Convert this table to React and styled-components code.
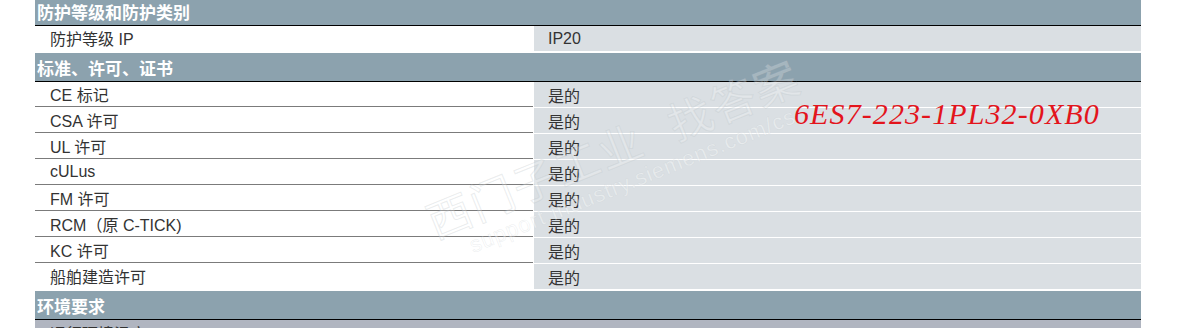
import styled, { createGlobalStyle } from "styled-components";

const GlobalStyle = createGlobalStyle`
  html, body {
    margin: 0;
    padding: 0;
    background: #ffffff;
    overflow: hidden;
  }
  body {
    font-family: "Liberation Sans", Arial, "Noto Sans CJK SC", sans-serif;
  }
`;

const sections = [
  {
    title: "防护等级和防护类别",
    rows: [["防护等级 IP", "IP20"]],
  },
  {
    title: "标准、许可、证书",
    rows: [
      ["CE 标记", "是的"],
      ["CSA 许可", "是的"],
      ["UL 许可", "是的"],
      ["cULus", "是的"],
      ["FM 许可", "是的"],
      ["RCM（原 C-TICK)", "是的"],
      ["KC 许可", "是的"],
      ["船舶建造许可", "是的"],
    ],
  },
  {
    title: "环境要求",
    rows: [],
    sub: "运行环境温度",
  },
];

const App = () => (
  <>
    <GlobalStyle />
    <Page>
      <Sheet>
        {sections.map((section) => (
          <Section key={section.title}>
            <Header>{section.title}</Header>
            {section.rows.map(([label, value], i) => (
              <Row key={label}>
                <Label $last={i === section.rows.length - 1}>{label}</Label>
                <Value $last={i === section.rows.length - 1}>{value}</Value>
              </Row>
            ))}
            {section.sub && <SubHeader>{section.sub}</SubHeader>}
          </Section>
        ))}
        <Watermark>
          <WatermarkBig>
            西门子工业<WatermarkGap />找答案
          </WatermarkBig>
          <WatermarkUrl>support.industry.siemens.com/cs</WatermarkUrl>
        </Watermark>
        <OrderNo>6ES7-223-1PL32-0XB0</OrderNo>
      </Sheet>
    </Page>
  </>
);

const Page = styled.div`
  width: 1204px;
  height: 328px;
  overflow: hidden;
`;

const Sheet = styled.div`
  position: relative;
  width: 1106px;
  margin: -3px 0 0 35px;
`;

const Section = styled.div`
  display: flex;
  flex-direction: column;
`;

const Header = styled.div`
  height: 28px;
  display: flex;
  align-items: center;
  padding-left: 2px;
  background: #8ca2ae;
  border-bottom: 1px solid #000000;
  color: #ffffff;
  font-size: 17px;
  font-weight: bold;
`;

const Row = styled.div`
  display: flex;
  font-size: 16px;
  color: #333333;
`;

const Label = styled.div`
  width: 498px;
  height: 25px;
  display: flex;
  align-items: center;
  padding-left: 15px;
  box-sizing: border-box;
  border-bottom: ${(p) => (p.$last ? "2px solid #ffffff" : "1px solid #7b7b7b")};
  margin-right: 1px;
`;

const Value = styled.div`
  flex: 1;
  height: 25px;
  display: flex;
  align-items: center;
  padding-left: 14px;
  background: #dadfe3;
  border-bottom: ${(p) => (p.$last ? "2px" : "1px")} solid #ffffff;
`;

const SubHeader = styled.div`
  height: 26px;
  display: flex;
  align-items: center;
  padding-left: 15px;
  background: #b0b5c0;
  color: #333333;
  font-size: 16px;
`;

const Watermark = styled.div`
  position: absolute;
  left: 386px;
  top: 207px;
  transform: rotate(-22deg);
  transform-origin: left top;
  display: flex;
  flex-direction: column;
  pointer-events: none;
  white-space: nowrap;
`;

const WatermarkBig = styled.div`
  display: flex;
  font-size: 44px;
  letter-spacing: 2px;
  line-height: 46px;
  color: rgba(255, 255, 255, 0.22);
  -webkit-text-stroke: 1px rgba(185, 192, 198, 0.3);
`;

const WatermarkGap = styled.span`
  width: 30px;
`;

const WatermarkUrl = styled.div`
  margin-left: 30px;
  font-size: 22px;
  line-height: 24px;
  letter-spacing: 1px;
  color: rgba(255, 255, 255, 0.4);
  -webkit-text-stroke: 0.5px rgba(185, 192, 198, 0.3);
`;

const OrderNo = styled.div`
  position: absolute;
  left: 759px;
  top: 101px;
  font-family: "Liberation Serif", "Times New Roman", serif;
  font-style: italic;
  font-size: 30px;
  letter-spacing: 1.1px;
  line-height: 32px;
  color: #e3141c;
  white-space: nowrap;
`;

export default App;
